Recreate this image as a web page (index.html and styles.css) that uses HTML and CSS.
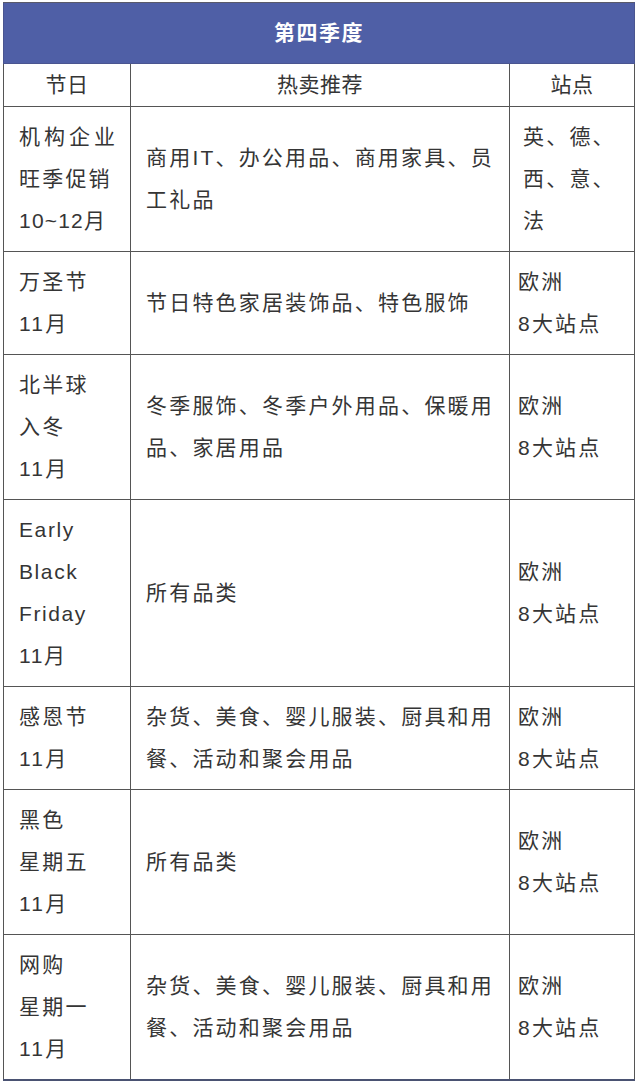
FILE: index.html
```html
<!DOCTYPE html>
<html lang="zh-CN">
<head>
<meta charset="utf-8">
<title>第四季度</title>
<link rel="stylesheet" href="styles.css">
</head>
<body>
<table class="season">
  <colgroup>
    <col class="c-holiday">
    <col class="c-items">
    <col class="c-sites">
  </colgroup>
  <thead>
    <tr><th class="title" colspan="3">第四季度</th></tr>
    <tr class="head"><td>节日</td><td>热卖推荐</td><td>站点</td></tr>
  </thead>
  <tbody>
    <tr>
      <td class="hol"><span class="wide">机构企业</span><br>旺季促销<br><span class="num">10~12月</span></td>
      <td class="items">商用IT、办公用品、商用家具、员工礼品</td>
      <td class="sites sites-in">英、德、西、意、法</td>
    </tr>
    <tr>
      <td class="hol">万圣节<br>11月</td>
      <td class="items">节日特色家居装饰品、特色服饰</td>
      <td class="sites">欧洲<br>8大站点</td>
    </tr>
    <tr>
      <td class="hol">北半球<br>入冬<br>11月</td>
      <td class="items">冬季服饰、冬季户外用品、保暖用品、家居用品</td>
      <td class="sites">欧洲<br>8大站点</td>
    </tr>
    <tr>
      <td class="hol latin">Early<br>Black<br>Friday<br>11月</td>
      <td class="items">所有品类</td>
      <td class="sites">欧洲<br>8大站点</td>
    </tr>
    <tr>
      <td class="hol">感恩节<br>11月</td>
      <td class="items">杂货、美食、婴儿服装、厨具和用餐、活动和聚会用品</td>
      <td class="sites">欧洲<br>8大站点</td>
    </tr>
    <tr>
      <td class="hol">黑色<br>星期五<br>11月</td>
      <td class="items">所有品类</td>
      <td class="sites">欧洲<br>8大站点</td>
    </tr>
    <tr class="last">
      <td class="hol">网购<br>星期一<br>11月</td>
      <td class="items">杂货、美食、婴儿服装、厨具和用餐、活动和聚会用品</td>
      <td class="sites">欧洲<br>8大站点</td>
    </tr>
  </tbody>
</table>
</body>
</html>
```

FILE: styles.css
```css
html, body {
  margin: 0;
  padding: 0;
  background: #ffffff;
}

body {
  font-family: "Liberation Sans", "Noto Sans CJK SC", sans-serif;
  color: #353535;
}

.season {
  margin: 2px 0 0 3px;
  width: 631px;
  border-collapse: collapse;
  table-layout: fixed;
  font-size: 21px;
  line-height: 42px;
  letter-spacing: 2.2px;
}

.c-holiday { width: 127px; }
.c-items { width: 379px; }
.c-sites { width: 125px; }

.season th,
.season td {
  border: 1px solid #555555;
  padding: 0;
  vertical-align: middle;
}

.season th.title {
  background: #4f5fa6;
  color: #ffffff;
  font-weight: bold;
  font-size: 21px;
  letter-spacing: 1.5px;
  line-height: 60px;
  height: 60px;
  text-align: center;
  border-color: #4a5590;
  border-top-color: #5a5a6a;
}

.season .head td {
  text-align: center;
  letter-spacing: 0.5px;
  line-height: 42px;
}

.season td.hol {
  padding: 9px 2px 9px 15px;
}

.season .hol .wide {
  letter-spacing: 4px;
}

.season .hol .num {
  letter-spacing: 1.2px;
}

.season td.latin {
  letter-spacing: 1.6px;
}

.season td.items {
  padding: 9px 8px 9px 15px;
}

.season td.sites {
  padding: 9px 4px 9px 8px;
}

.season td.sites-in {
  padding: 9px 10px 9px 13px;
}

.season .last td {
  border-bottom: 2px solid #4a5272;
}
```
